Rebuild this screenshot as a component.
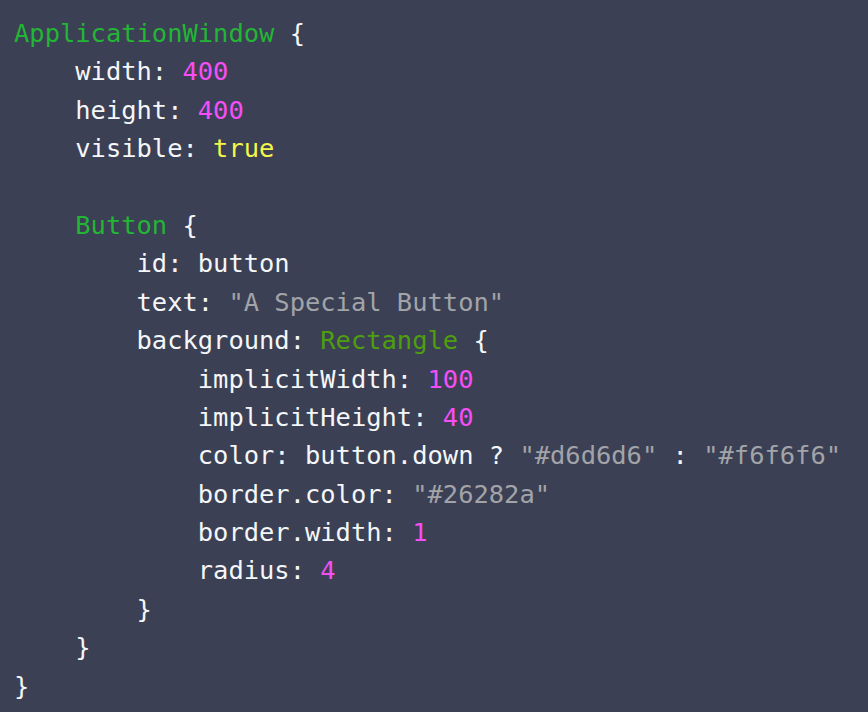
const T = ({ c, children }) => <span className={c}>{children}</span>;

const white = 'text-[#f4f6f8]';
const green = 'text-[#23b534]';
const dgreen = 'text-[#4f9e0e]';
const num = 'text-[#f64ef6]';
const yel = 'text-[#f6f64a]';
const str = 'text-[#a2a4a8]';

const lines = [
  [[green, 'ApplicationWindow'], [white, ' {']],
  [[white, '    width: '], [num, '400']],
  [[white, '    height: '], [num, '400']],
  [[white, '    visible: '], [yel, 'true']],
  [],
  [[white, '    '], [green, 'Button'], [white, ' {']],
  [[white, '        id: button']],
  [[white, '        text: '], [str, '"A Special Button"']],
  [[white, '        background: '], [dgreen, 'Rectangle'], [white, ' {']],
  [[white, '            implicitWidth: '], [num, '100']],
  [[white, '            implicitHeight: '], [num, '40']],
  [[white, '            color: button.down ? '], [str, '"#d6d6d6"'], [white, ' : '], [str, '"#f6f6f6"']],
  [[white, '            border.color: '], [str, '"#26282a"']],
  [[white, '            border.width: '], [num, '1']],
  [[white, '            radius: '], [num, '4']],
  [[white, '        }']],
  [[white, '    }']],
  [[white, '}']],
];

export default function App() {
  return (
    <div className="w-[868px] h-[712px] bg-[#3b4055] overflow-hidden">
      <pre
        className="pt-[14px] pl-[14px] text-[25.45px] leading-[38.4px] whitespace-pre"
        style={{ fontFamily: '"DejaVu Sans Mono", "Liberation Mono", monospace' }}
      >
        {lines.map((parts, i) => (
          <div key={i} className="h-[38.4px]">
            {parts.map(([c, t], j) => <T key={j} c={c}>{t}</T>)}
          </div>
        ))}
      </pre>
    </div>
  );
}
